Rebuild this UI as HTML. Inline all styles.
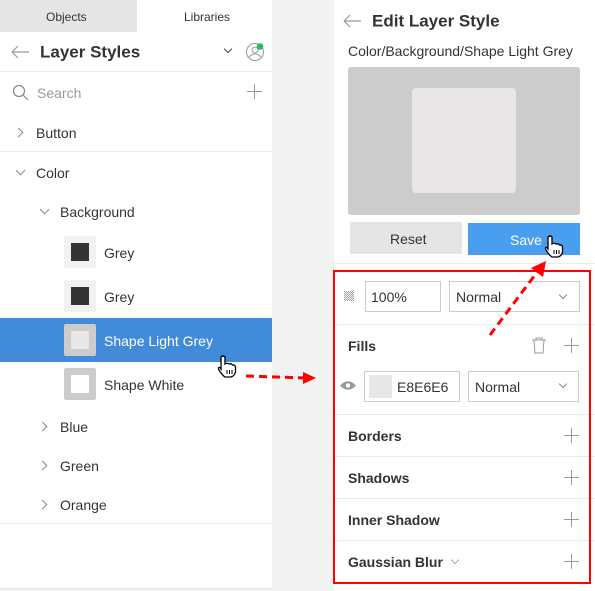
<!DOCTYPE html>
<html><head><meta charset="utf-8"><style>
*{margin:0;padding:0;box-sizing:border-box}
body{width:595px;height:591px;position:relative;background:#f2f2f2;font-family:"Segoe UI","Liberation Sans",sans-serif;color:#333;overflow:hidden}
.a{position:absolute}
.t{position:absolute;white-space:nowrap;line-height:1;transform:translateY(-50%)}
.ln{position:absolute;height:1px;background:#ebebeb}
.chev{position:absolute;width:7px;height:7px;border-right:1.2px solid #888;border-bottom:1.2px solid #888}
.r{transform:rotate(-45deg)}
.d{transform:rotate(45deg)}
.plus{position:absolute;width:15px;height:15px}
.plus:before{content:"";position:absolute;left:7px;top:0;width:1px;height:15px;background:#999}
.plus:after{content:"";position:absolute;top:7px;left:0;width:15px;height:1px;background:#999}
.sw{position:absolute;width:32px;height:32px;border-radius:2px}
.box{position:absolute;border:1px solid #ccc;background:#fff}
</style></head><body>
<div class="a" style="left:0;top:0;width:272px;height:589px;background:#fff;border-bottom:1px solid #e5e5e5"></div>
<div class="a" style="left:0;top:0;width:137px;height:32px;background:#e5e5e5"></div>
<div class="t" style="left:46px;top:17px;font-size:12px">Objects</div>
<div class="t" style="left:184px;top:17px;font-size:12px">Libraries</div>
<svg class="a" style="left:10px;top:44px" width="20" height="16"><path d="M2 8H19M2 8L8 2M2 8L8 14" stroke="#999" stroke-width="1.2" fill="none"/></svg>
<div class="t" style="left:40px;top:52px;font-size:17px;font-weight:bold">Layer Styles</div>
<div class="chev d" style="left:225px;top:46px;width:6px;height:6px;border-color:#444"></div>
<svg class="a" style="left:245px;top:42px" width="22" height="20"><circle cx="10" cy="10" r="8.5" stroke="#999" fill="none"/><circle cx="10" cy="8" r="3" stroke="#999" fill="none"/><path d="M4 15Q10 9 16 15" stroke="#999" fill="none"/><circle cx="15" cy="4.5" r="3.3" fill="#22c05a"/></svg>
<div class="ln" style="left:0;top:71px;width:272px"></div>
<svg class="a" style="left:12px;top:84px" width="18" height="18"><circle cx="7" cy="7" r="5.5" stroke="#888" fill="none" stroke-width="1.2"/><path d="M11 11L16 16" stroke="#888" stroke-width="1.2"/></svg>
<div class="t" style="left:37px;top:93px;font-size:14px;color:#999">Search</div>
<div class="plus" style="left:247px;top:84px"></div>
<div class="chev r" style="left:15px;top:129px"></div>
<div class="t" style="left:36px;top:133px;font-size:14px">Button</div>
<div class="ln" style="left:0;top:151px;width:272px"></div>
<div class="chev d" style="left:17px;top:167px"></div>
<div class="t" style="left:36px;top:173px;font-size:14px">Color</div>
<div class="chev d" style="left:41px;top:206px"></div>
<div class="t" style="left:60px;top:212px;font-size:14px">Background</div>
<div class="sw" style="left:64px;top:236px;background:#f2f2f2"><div class="a" style="left:7px;top:7px;width:18px;height:18px;background:#333"></div></div>
<div class="t" style="left:104px;top:253px;font-size:14px">Grey</div>
<div class="sw" style="left:64px;top:280px;background:#f2f2f2"><div class="a" style="left:7px;top:7px;width:18px;height:18px;background:#333"></div></div>
<div class="t" style="left:104px;top:297px;font-size:14px">Grey</div>
<div class="a" style="left:0;top:318px;width:272px;height:44px;background:#428bd8"></div>
<div class="sw" style="left:64px;top:324px;background:#ccc"><div class="a" style="left:7px;top:7px;width:18px;height:18px;background:#e8e6e6"></div></div>
<div class="t" style="left:104px;top:341px;font-size:14px;color:#fff">Shape Light Grey</div>
<div class="sw" style="left:64px;top:368px;background:#ccc"><div class="a" style="left:7px;top:7px;width:18px;height:18px;background:#fff"></div></div>
<div class="t" style="left:104px;top:385px;font-size:14px">Shape White</div>
<div class="chev r" style="left:39px;top:423px"></div>
<div class="t" style="left:60px;top:427px;font-size:14px">Blue</div>
<div class="chev r" style="left:39px;top:462px"></div>
<div class="t" style="left:60px;top:466px;font-size:14px">Green</div>
<div class="chev r" style="left:39px;top:501px"></div>
<div class="t" style="left:60px;top:505px;font-size:14px">Orange</div>
<div class="ln" style="left:0;top:523px;width:272px"></div>
<div class="a" style="left:334px;top:0;width:261px;height:591px;background:#fff"></div>
<svg class="a" style="left:342px;top:13px" width="20" height="16"><path d="M2 8H19M2 8L8 2M2 8L8 14" stroke="#999" stroke-width="1.2" fill="none"/></svg>
<div class="t" style="left:372px;top:21px;font-size:17px;font-weight:bold">Edit Layer Style</div>
<div class="t" style="left:348px;top:51px;font-size:14px">Color/Background/Shape Light Grey</div>
<div class="a" style="left:348px;top:67px;width:232px;height:148px;background:#ccc;border-radius:3px"></div>
<div class="a" style="left:412px;top:88px;width:104px;height:105px;background:#e8e6e6;border-radius:4px"></div>
<div class="a" style="left:350px;top:222px;width:112px;height:32px;background:#e5e5e5"></div>
<div class="t" style="left:390px;top:239px;font-size:14px">Reset</div>
<div class="a" style="left:468px;top:223px;width:112px;height:32px;background:#4a9eef"></div>
<div class="t" style="left:510px;top:240px;font-size:14px;color:#fff">Save</div>
<div class="ln" style="left:334px;top:263px;width:261px"></div>
<svg class="a" style="left:344px;top:291px" width="10" height="10"><pattern id="p" width="2" height="2" patternUnits="userSpaceOnUse"><rect width="1" height="1" fill="#999"/><rect x="1" y="1" width="1" height="1" fill="#999"/></pattern><rect width="10" height="10" fill="url(#p)"/></svg>
<div class="box" style="left:365px;top:281px;width:76px;height:31px"></div>
<div class="t" style="left:371px;top:297px;font-size:14px">100%</div>
<div class="box" style="left:449px;top:281px;width:131px;height:31px"></div>
<div class="t" style="left:456px;top:297px;font-size:14px">Normal</div>
<div class="chev d" style="left:560px;top:292px;width:6px;height:6px"></div>
<div class="ln" style="left:334px;top:324px;width:261px"></div>
<div class="t" style="left:348px;top:346px;font-size:14px;font-weight:bold">Fills</div>
<svg class="a" style="left:531px;top:337px" width="16" height="17"><path d="M1 3H15M5 3V1H11V3M3 3L4 16H12L13 3" stroke="#999" fill="none"/></svg>
<div class="plus" style="left:564px;top:338px"></div>
<svg class="a" style="left:340px;top:380px" width="16" height="11"><path d="M0 5.5Q8 -3 16 5.5Q8 14 0 5.5Z" fill="#999"/><circle cx="8" cy="5.5" r="2.2" fill="#fff"/></svg>
<div class="box" style="left:364px;top:371px;width:96px;height:31px"></div>
<div class="a" style="left:369px;top:375px;width:23px;height:23px;background:#e8e6e6"></div>
<div class="t" style="left:397px;top:387px;font-size:14px">E8E6E6</div>
<div class="box" style="left:468px;top:371px;width:111px;height:31px"></div>
<div class="t" style="left:475px;top:387px;font-size:14px">Normal</div>
<div class="chev d" style="left:560px;top:381px;width:6px;height:6px"></div>
<div class="ln" style="left:334px;top:414px;width:261px"></div>
<div class="t" style="left:348px;top:436px;font-size:14px;font-weight:bold">Borders</div>
<div class="plus" style="left:564px;top:428px"></div>
<div class="ln" style="left:334px;top:456px;width:261px"></div>
<div class="t" style="left:348px;top:478px;font-size:14px;font-weight:bold">Shadows</div>
<div class="plus" style="left:564px;top:470px"></div>
<div class="ln" style="left:334px;top:498px;width:261px"></div>
<div class="t" style="left:348px;top:520px;font-size:14px;font-weight:bold">Inner Shadow</div>
<div class="plus" style="left:564px;top:512px"></div>
<div class="ln" style="left:334px;top:540px;width:261px"></div>
<div class="t" style="left:348px;top:562px;font-size:14px;font-weight:bold">Gaussian Blur</div>
<div class="chev d" style="left:452px;top:557px;width:6px;height:6px;border-color:#aaa"></div>
<div class="plus" style="left:564px;top:554px"></div>
<div class="a" style="left:333px;top:270px;width:258px;height:314px;border:2px solid #f00"></div>
<svg class="a" style="left:0;top:0" width="595" height="591">
<path d="M246 376L306 378" stroke="#f00" stroke-width="3" stroke-dasharray="8,5"/>
<path d="M303 372L316 378L303 384Z" fill="#f00"/>
<path d="M490 335L538 271" stroke="#f00" stroke-width="3" stroke-dasharray="8,5"/>
<path d="M531 268L546 261L543 277Z" fill="#f00"/>
<g transform="translate(217,355)"><path d="M4 2Q6 0 8 2V9Q10 7.5 12 9Q14 8 15.5 10Q18 9.5 18.5 12V17Q17.5 21 14 22H8Q5 20 2 15Q0.5 12 3 12.5L4 14Z" fill="#fff" stroke="#000" stroke-width="1.3"/><path d="M10 15V19M12.5 15V19M15 15V19" stroke="#000"/></g>
<g transform="translate(544,235)"><path d="M4 2Q6 0 8 2V9Q10 7.5 12 9Q14 8 15.5 10Q18 9.5 18.5 12V17Q17.5 21 14 22H8Q5 20 2 15Q0.5 12 3 12.5L4 14Z" fill="#fff" stroke="#000" stroke-width="1.3"/><path d="M10 15V19M12.5 15V19M15 15V19" stroke="#000"/></g>
</svg>
</body></html>
